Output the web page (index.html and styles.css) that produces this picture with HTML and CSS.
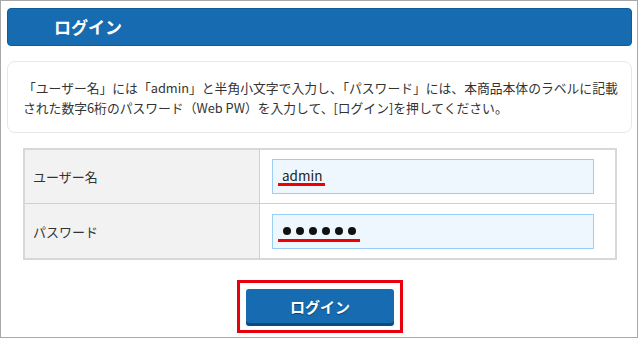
FILE: index.html
```html
<!DOCTYPE html>
<html lang="ja">
<head>
    <meta charset="UTF-8">
    <meta name="viewport" content="width=device-width, initial-scale=1.0">
    <title>ログイン</title>
    <link rel="stylesheet" href="styles.css">
</head>
<body>

    <div class="frame">
        <div class="title"><span class="title-text">ログイン</span></div>

        <div class="info">
            「ユーザー名」には「admin」と半角小文字で入力し、「パスワード」には、本商品本体のラベルに記載<br>
            された数字6桁のパスワード（Web PW）を入力して、[ログイン]を押してください。
        </div>

        <table class="login-table">
            <tr>
                <th>ユーザー名</th>
                <td>
                    <div class="field"><span class="mark">admin</span></div>
                </td>
            </tr>
            <tr>
                <th>パスワード</th>
                <td>
                    <div class="field">
                        <span class="mark dots">
                            <i></i><i></i><i></i><i></i><i></i><i></i>
                        </span>
                    </div>
                </td>
            </tr>
        </table>

        <div class="btn-area">
            <div class="btn-frame">
                <button class="btn">ログイン</button>
            </div>
        </div>
    </div>

</body>
</html>
```

FILE: styles.css
```css
body {
    margin: 0;
    background: #fff;
    font-family: "Noto Sans CJK JP", "Noto Sans", sans-serif;
    color: #333;
}
.frame {
    box-sizing: border-box;
    width: 638px;
    height: 338px;
    border: 1px solid #a8a8a8;
    padding: 7px 5px 0 6px;
}
.title {
    box-sizing: border-box;
    display: flex;
    align-items: center;
    height: 38px;
    padding-left: 46px;
    background: #176bb1;
    border: 1px solid #0f5c9c;
    border-radius: 4px;
}
.title-text {
    color: #fff;
    font-size: 17px;
    font-weight: bold;
    line-height: 20px;
}
.info {
    box-sizing: border-box;
    height: 72px;
    margin-top: 15px;
    padding: 16px 0 0 15px;
    border: 1px solid #e8e8e8;
    border-radius: 8px;
    font-size: 12.8px;
    line-height: 20px;
}
.login-table {
    width: 594px;
    margin: 15px 0 0 16px;
    border-collapse: collapse;
    border: 2px solid #d8d8d8;
    font-size: 13px;
}
.login-table th,
.login-table td {
    border: 1px solid #d0d0d0;
    padding: 0;
}
.login-table tr:first-child th,
.login-table tr:first-child td {
    height: 53px;
}
.login-table tr:last-child th,
.login-table tr:last-child td {
    height: 54px;
}
.login-table th {
    width: 226px;
    padding-left: 8px;
    background: #f2f2f2;
    font-weight: normal;
    text-align: left;
}
.login-table td {
    padding-left: 12px;
}
.field {
    box-sizing: border-box;
    display: flex;
    align-items: center;
    width: 322px;
    height: 35px;
    padding-left: 5px;
    background: #eef6fe;
    border: 1px solid #9ccdf3;
    font-size: 13.5px;
    color: #222;
}
.mark {
    display: inline-flex;
    align-items: center;
    padding: 0 3px 0 4px;
    border-bottom: 3px solid #f00000;
    line-height: 16px;
}
.dots {
    gap: 5px;
    height: 16px;
    padding: 0 4px 0 5px;
    margin-top: 3px;
}
.dots i {
    width: 8px;
    height: 8px;
    border-radius: 50%;
    background: #111;
}
.btn-area {
    display: flex;
    justify-content: center;
    margin-top: 20px;
    padding-left: 1px;
}
.btn-frame {
    box-sizing: border-box;
    width: 166px;
    height: 53px;
    padding: 6px 6px 0;
    border: 3px solid #e8000c;
}
.btn {
    display: block;
    width: 148px;
    height: 34px;
    padding: 0;
    background: #176bb1;
    border: none;
    border-radius: 3px;
    box-shadow: 0 3px 0 #0e4a7e;
    color: #fff;
    font-family: "Noto Sans CJK JP", sans-serif;
    font-size: 15px;
    font-weight: bold;
    text-shadow: 0 1px 1px rgba(0, 0, 0, 0.4);
    cursor: pointer;
}
```
